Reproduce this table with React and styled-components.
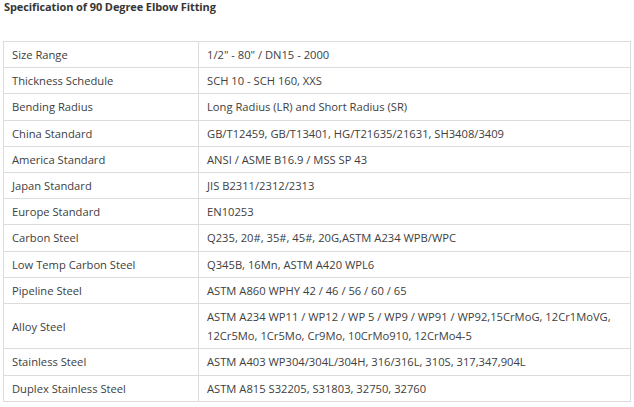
import React from 'react';
import styled, { createGlobalStyle } from 'styled-components';

const GlobalStyle = createGlobalStyle`
  body {
    margin: 0;
    background: #fff;
    font-family: 'Segoe UI', 'Open Sans', sans-serif;
  }
`;

const Page = styled.div`
  padding: 0 3px 0 3px;
  width: 628px;
`;

const Title = styled.h3`
  margin: 0 0 27px 1px;
  padding-top: 0;
  font-size: 11px;
  line-height: 14px;
  font-weight: 700;
  color: #363636;
  letter-spacing: -0.1px;
`;

const Table = styled.table`
  width: 628px;
  border-collapse: collapse;
  border: 1px solid #dcdcdc;
  table-layout: fixed;
`;

const Cell = styled.td`
  border: 1px solid #dcdcdc;
  padding: 3px 8px;
  font-size: 11.2px;
  line-height: 19.2px;
  color: #404040;
  vertical-align: middle;
  width: ${(p) => (p.$label ? '178px' : 'auto')};
`;

const rows = [
  ['Size Range', '1/2" - 80" / DN15 - 2000'],
  ['Thickness Schedule', 'SCH 10 - SCH 160, XXS'],
  ['Bending Radius', 'Long Radius (LR) and Short Radius (SR)'],
  ['China Standard', 'GB/T12459, GB/T13401, HG/T21635/21631, SH3408/3409'],
  ['America Standard', 'ANSI / ASME B16.9 / MSS SP 43'],
  ['Japan Standard', 'JIS B2311/2312/2313'],
  ['Europe Standard', 'EN10253'],
  ['Carbon Steel', 'Q235, 20#, 35#, 45#, 20G,ASTM A234 WPB/WPC'],
  ['Low Temp Carbon Steel', 'Q345B, 16Mn, ASTM A420 WPL6'],
  ['Pipeline Steel', 'ASTM A860 WPHY 42 / 46 / 56 / 60 / 65'],
  ['Alloy Steel', 'ASTM A234 WP11 / WP12 / WP 5 / WP9 / WP91 / WP92,15CrMoG, 12Cr1MoVG, 12Cr5Mo, 1Cr5Mo, Cr9Mo, 10CrMo910, 12CrMo4-5'],
  ['Stainless Steel', 'ASTM A403 WP304/304L/304H, 316/316L, 310S, 317,347,904L'],
  ['Duplex Stainless Steel', 'ASTM A815 S32205, S31803, 32750, 32760'],
];

export default function App() {
  return (
    <Page>
      <GlobalStyle />
      <Title>Specification of 90 Degree Elbow Fitting</Title>
      <Table>
        <tbody>
          {rows.map(([label, value]) => (
            <tr key={label}>
              <Cell $label>{label}</Cell>
              <Cell>{value}</Cell>
            </tr>
          ))}
        </tbody>
      </Table>
    </Page>
  );
}
